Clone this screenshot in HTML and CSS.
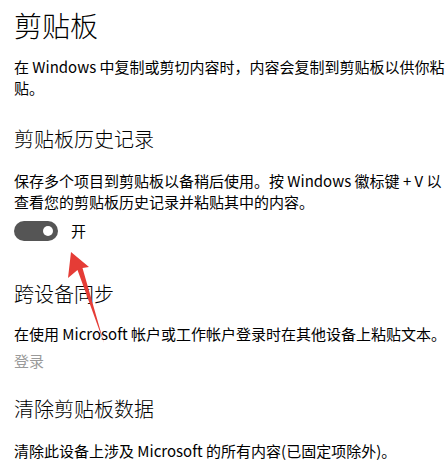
FILE: index.html
```html
<!DOCTYPE html>
<html lang="zh-CN">
<head>
<meta charset="utf-8">
<title>剪贴板</title>
<link rel="stylesheet" href="styles.css">
</head>
<body>
<main class="page">
  <h1 class="title">剪贴板</h1>
  <p class="desc desc-intro">在 Windows 中复制或剪切内容时，内容会复制到剪贴板以供你粘贴。</p>

  <h2 class="heading heading-history">剪贴板历史记录</h2>
  <p class="desc desc-history">保存多个项目到剪贴板以备稍后使用。按 Windows 徽标键 + V 以查看您的剪贴板历史记录并粘贴其中的内容。</p>
  <div class="toggle-row">
    <span class="toggle"><span class="knob"></span></span>
    <span class="toggle-label">开</span>
  </div>

  <h2 class="heading heading-sync">跨设备同步</h2>
  <p class="desc desc-sync">在使用 Microsoft 帐户或工作帐户登录时在其他设备上粘贴文本。</p>
  <div class="link">登录</div>

  <h2 class="heading heading-clear">清除剪贴板数据</h2>
  <p class="desc desc-clear">清除此设备上涉及 Microsoft 的所有内容(已固定项除外)。</p>

  <svg class="arrow" width="446" height="471" viewBox="0 0 446 471" aria-hidden="true">
    <polygon points="71,252 89,267 82.5,268 104,343 77.5,270 68,278" fill="#e53c36"/>
  </svg>
</main>
</body>
</html>
```

FILE: styles.css
```css
html, body {
  margin: 0;
  padding: 0;
  background: #ffffff;
}

body {
  font-family: "Noto Sans CJK SC", "Noto Sans", sans-serif;
  color: #000000;
  width: 446px;
  height: 471px;
  overflow: hidden;
}

.page {
  position: relative;
  padding: 7px 0 0 14px;
  display: flex;
  flex-direction: column;
  align-items: flex-start;
}

.title {
  margin: 0;
  font-size: 28px;
  line-height: 36px;
  font-weight: 300;
}

.heading {
  margin: 0;
  font-size: 20px;
  line-height: 28px;
  font-weight: 300;
}

.desc {
  margin: 0;
  font-size: 15px;
  line-height: 21px;
}

.desc-intro { margin-top: 13px; }
.heading-history { margin-top: 27px; }
.desc-history { margin-top: 17px; }

.toggle-row {
  margin-top: 9px;
  display: flex;
  align-items: center;
  gap: 13px;
  height: 20px;
}

.toggle {
  width: 44px;
  height: 20px;
  border-radius: 10px;
  background: #555555;
  display: flex;
  align-items: center;
  justify-content: flex-end;
  padding-right: 5px;
  box-sizing: border-box;
}

.knob {
  width: 10px;
  height: 10px;
  border-radius: 50%;
  background: #ffffff;
}

.toggle-label {
  font-size: 15px;
  line-height: 20px;
}

.heading-sync { margin-top: 39px; }
.desc-sync {
  margin-top: 15px;
  white-space: nowrap;
}

.link {
  margin-top: 6px;
  font-size: 15px;
  line-height: 21px;
  color: #9a9a9a;
}

.heading-clear { margin-top: 24px; }
.desc-clear { margin-top: 17px; }

.arrow {
  position: absolute;
  left: 0;
  top: 0;
  pointer-events: none;
}
```
